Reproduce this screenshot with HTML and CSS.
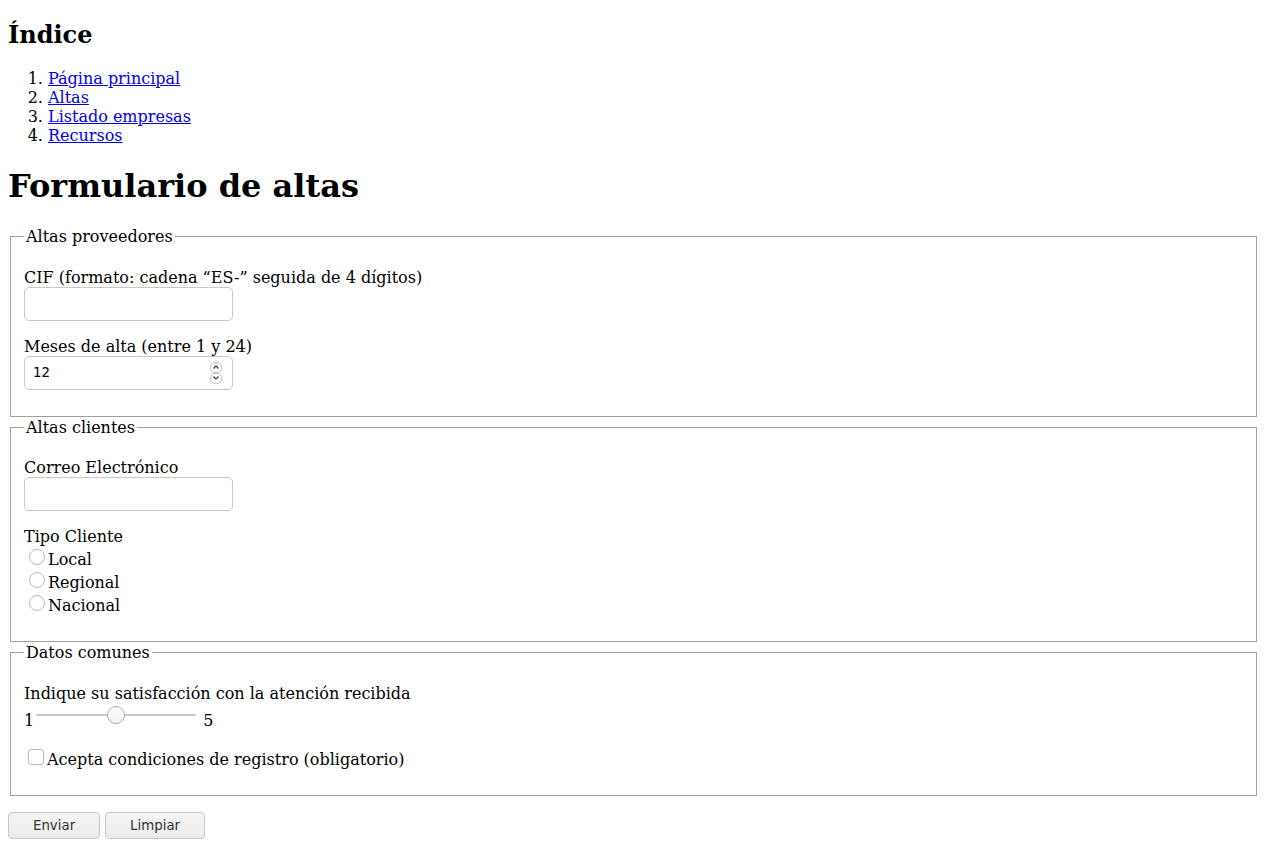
FILE: index.html
```html
<!DOCTYPE html>
<html lang="es">
<head>
<meta charset="utf-8">
<title>Formulario de altas</title>
<link rel="stylesheet" href="styles.css">
</head>
<body>
<nav class="index">
  <h2 class="index-title">Índice</h2>
  <ol class="index-list">
    <li><a class="index-link" href="#">Página principal</a></li>
    <li><a class="index-link" href="#">Altas</a></li>
    <li><a class="index-link" href="#">Listado empresas</a></li>
    <li><a class="index-link" href="#">Recursos</a></li>
  </ol>
</nav>
<h1 class="page-title">Formulario de altas</h1>
<form class="form">
  <fieldset class="group">
    <legend class="group-legend">Altas proveedores</legend>
    <div class="field">
      <label class="field-label" for="cif">CIF (formato: cadena “ES-” seguida de 4 dígitos)</label>
      <input class="text-input" id="cif" type="text">
    </div>
    <div class="field">
      <label class="field-label" for="meses">Meses de alta (entre 1 y 24)</label>
      <div class="num-field">
        <input class="num-input" id="meses" type="number" value="12" min="1" max="24">
        <span class="spin">
          <span class="spin-btn"><svg class="chev" width="6" height="4" viewBox="0 0 6 4"><polyline points="0.5,3.5 3,1 5.5,3.5" /></svg></span>
          <span class="spin-btn"><svg class="chev" width="6" height="4" viewBox="0 0 6 4"><polyline points="0.5,0.5 3,3 5.5,0.5" /></svg></span>
        </span>
      </div>
    </div>
  </fieldset>
  <fieldset class="group">
    <legend class="group-legend">Altas clientes</legend>
    <div class="field">
      <label class="field-label" for="correo">Correo Electrónico</label>
      <input class="text-input" id="correo" type="email">
    </div>
    <div class="field">
      <div class="field-label">Tipo Cliente</div>
      <label class="choice"><input class="radio" type="radio" name="tipo"><span class="choice-text">Local</span></label>
      <label class="choice"><input class="radio" type="radio" name="tipo"><span class="choice-text">Regional</span></label>
      <label class="choice"><input class="radio" type="radio" name="tipo"><span class="choice-text">Nacional</span></label>
    </div>
  </fieldset>
  <fieldset class="group">
    <legend class="group-legend">Datos comunes</legend>
    <div class="field">
      <label class="field-label" for="satis">Indique su satisfacción con la atención recibida</label>
      <div class="range-row">
        <span class="range-end">1</span>
        <input class="range" id="satis" type="range" min="1" max="5" value="3">
        <span class="range-end">5</span>
      </div>
    </div>
    <div class="field">
      <label class="choice"><input class="check" type="checkbox"><span class="choice-text">Acepta condiciones de registro (obligatorio)</span></label>
    </div>
  </fieldset>
  <div class="actions">
    <button class="btn" type="submit">Enviar</button>
    <button class="btn" type="reset">Limpiar</button>
  </div>
</form>
</body>
</html>
```

FILE: styles.css
```css
html {
  background: #ffffff;
}

body {
  margin: 0 8px 8px;
  padding-top: 21px;
  font-family: "DejaVu Serif", serif;
  font-size: 16px;
  line-height: 19px;
  color: #000000;
}

.index-title {
  margin: 0 0 20px;
  font-size: 24px;
  line-height: 28px;
  font-weight: bold;
}

.index-list {
  margin: 20px 0 0;
  padding-left: 40px;
}

.index-link {
  color: #0000ee;
  text-decoration: underline;
}

.page-title {
  margin: 23px 0 22px;
  font-size: 32px;
  line-height: 37px;
  font-weight: bold;
}

.form {
  margin: 0;
}

.group {
  margin: 0 3px 1px 2px;
  padding: 5.6px 13px 10px;
  border: 1px solid #a0a0a0;
  min-inline-size: 0;
}

.group-legend {
  padding: 0 2px;
  line-height: 19px;
}

.field {
  margin: 16px 0;
}

.field-label {
  display: block;
  line-height: 19px;
}

.text-input {
  display: block;
  box-sizing: border-box;
  width: 209px;
  height: 34px;
  margin: 0;
  padding: 0 8px;
  border: 1px solid #cdc7c2;
  border-radius: 5px;
  background: #ffffff;
  font-family: "DejaVu Sans", sans-serif;
  font-size: 13.33px;
  outline: none;
}

.num-field {
  display: flex;
  box-sizing: border-box;
  width: 209px;
  height: 34px;
  border: 1px solid #cdc7c2;
  border-radius: 5px;
  background: #ffffff;
}

.num-input {
  flex: 1;
  min-width: 0;
  margin: 0;
  padding: 0 0 0 8px;
  border: none;
  background: transparent;
  font-family: "DejaVu Sans", sans-serif;
  font-size: 13.33px;
  color: #000000;
  outline: none;
  -moz-appearance: textfield;
}

.num-input::-webkit-inner-spin-button,
.num-input::-webkit-outer-spin-button {
  -webkit-appearance: none;
  margin: 0;
}

.spin {
  display: flex;
  flex-direction: column;
  align-self: center;
  margin-right: 10px;
}

.spin-btn {
  display: flex;
  align-items: center;
  justify-content: center;
  box-sizing: border-box;
  width: 12px;
  height: 11px;
  border: 1px solid #c8c3be;
  border-radius: 5px;
  background: #ffffff;
}

.chev {
  display: block;
  fill: none;
  stroke: #2e3436;
  stroke-width: 1.1;
}

.choice {
  display: flex;
  align-items: flex-start;
  height: 23px;
}

.choice-text {
  margin-top: 4px;
  line-height: 19px;
}

.radio,
.check {
  -webkit-appearance: none;
  appearance: none;
  box-sizing: border-box;
  width: 16px;
  height: 16px;
  margin: 3px 3px 0 5px;
  border: 1px solid #bfbab5;
  background: #ffffff;
  flex: none;
}

.radio {
  border-radius: 50%;
}

.check {
  margin: 3px 3px 0 4px;
  border-radius: 3px;
}

.range-row {
  display: flex;
  align-items: flex-start;
  height: 27px;
}

.range-end {
  margin-top: 8px;
  line-height: 19px;
}

.range {
  -webkit-appearance: none;
  appearance: none;
  width: 160px;
  height: 24px;
  margin: 0 7px 0 2px;
  padding: 0;
  background: transparent;
}

.range::-webkit-slider-runnable-track {
  height: 2px;
  border-radius: 1px;
  background: #cdc7c2;
}

.range::-webkit-slider-thumb {
  -webkit-appearance: none;
  appearance: none;
  box-sizing: border-box;
  width: 18px;
  height: 18px;
  margin-top: -8px;
  border: 1px solid #b3aea9;
  border-radius: 50%;
  background: linear-gradient(#ffffff, #f3f2f1);
}

.actions {
  display: flex;
  gap: 5px;
  margin-top: 16px;
}

.btn {
  box-sizing: border-box;
  height: 27px;
  margin: 0;
  padding: 0 24px;
  border: 1px solid #cdc7c2;
  border-radius: 4px;
  background: linear-gradient(#f6f5f4, #edebe9);
  font-family: "DejaVu Sans", sans-serif;
  font-size: 13.33px;
  color: #2e3436;
}
```
